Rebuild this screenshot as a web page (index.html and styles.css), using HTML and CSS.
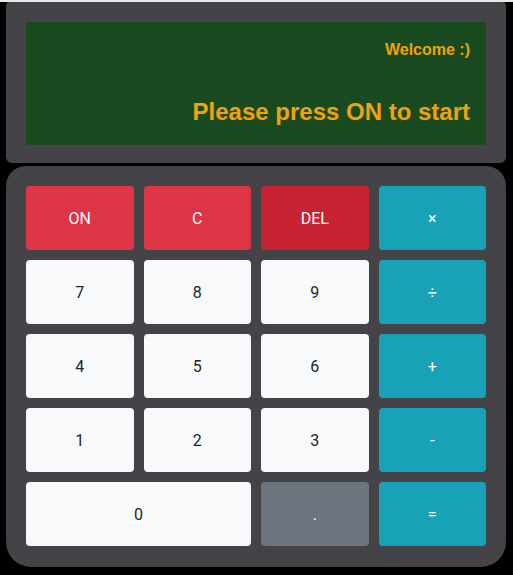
FILE: index.html
```html
<!DOCTYPE html>
<html>
<head>
<meta charset="utf-8">
<link rel="stylesheet" href="styles.css">
</head>
<body>
<div class="calc">
  <div class="top">
    <div class="screen">
      <div class="welcome">Welcome :)</div>
      <div class="message">Please press ON to start</div>
    </div>
  </div>
  <div class="pad">
    <button class="btn red">ON</button>
    <button class="btn red">C</button>
    <button class="btn dark-red">DEL</button>
    <button class="btn teal">×</button>
    <button class="btn light">7</button>
    <button class="btn light">8</button>
    <button class="btn light">9</button>
    <button class="btn teal">÷</button>
    <button class="btn light">4</button>
    <button class="btn light">5</button>
    <button class="btn light">6</button>
    <button class="btn teal">+</button>
    <button class="btn light">1</button>
    <button class="btn light">2</button>
    <button class="btn light">3</button>
    <button class="btn teal">-</button>
    <button class="btn light wide">0</button>
    <button class="btn grey">.</button>
    <button class="btn teal">=</button>
  </div>
</div>
</body>
</html>
```
FILE: styles.css
```css
html { background: #000; }
body {
  margin: 0;
  background: #000;
  border-top: 2px solid #e8e8e8;
  font-family: "Segoe UI", Roboto, "Noto Sans", sans-serif;
}
.calc {
  width: 500px;
  margin-left: 6px;
  display: flex;
  flex-direction: column;
  gap: 3px;
}
.top {
  background: #444348;
  border-radius: 4px 4px 6px 6px;
  padding: 20px 20px 18px;
}
.screen {
  background: #1a4a20;
  height: 123px;
  box-sizing: border-box;
  padding: 19px 16px 0;
  text-align: right;
  color: #f0a30a;
  font-family: "Liberation Sans", Arial, sans-serif;
  font-weight: bold;
}
.welcome {
  font-size: 16px;
  line-height: 18px;
}
.message {
  font-size: 24px;
  line-height: 28px;
  margin-top: 39px;
}
.pad {
  background: #444348;
  border-radius: 20px 20px 25px 25px;
  padding: 20px 20px 21px;
  display: grid;
  grid-template-columns: repeat(4, 1fr);
  grid-auto-rows: 64px;
  gap: 10px;
}
.btn {
  border: none;
  border-radius: 4px;
  font-family: inherit;
  font-size: 16px;
  padding: 0;
  color: #fff;
}
.btn.wide { grid-column: span 2; }
.red { background: #dc3545; }
.dark-red { background: #c82333; }
.teal { background: #17a2b8; }
.light { background: #f8f9fa; color: #212529; }
.grey { background: #6c757d; }
```
